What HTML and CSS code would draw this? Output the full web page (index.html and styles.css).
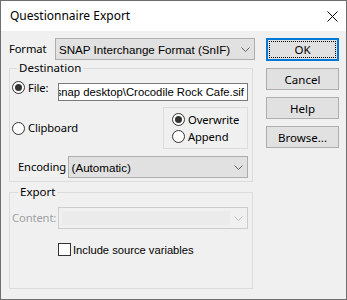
FILE: index.html
```html
<!DOCTYPE html>
<html>
<head>
<meta charset="utf-8">
<link rel="stylesheet" href="styles.css">
</head>
<body>
<div class="window">
  <div class="titlebar">
    <span class="title">Questionnaire Export</span>
    <svg class="close" width="11" height="11" viewBox="0 0 11 11"><path d="M0.5 0.5 L10.5 10.5 M10.5 0.5 L0.5 10.5" stroke="#000" stroke-width="1" fill="none"/></svg>
  </div>
  <div class="body">
    <div class="left">
      <div class="format-row">
        <span class="lbl format-lbl">Format</span>
        <div class="combo format-combo"><span class="combo-text">SNAP Interchange Format (SnIF)</span><span class="chev"><svg width="9" height="5" viewBox="0 0 9 5"><path d="M0.5 0.5 L4.5 4.5 L8.5 0.5" stroke="#606060" fill="none"/></svg></span></div>
      </div>
      <fieldset class="group dest">
        <legend class="legend">Destination</legend>
        <div class="file-row">
          <label class="radio file-radio"><span class="rb on"></span><span class="lbl">File:</span></label>
          <div class="textbox"><span class="tb-text">snap desktop\Crocodile Rock Cafe.sif</span></div>
        </div>
        <div class="clip-row">
          <label class="radio"><span class="rb"></span><span class="lbl">Clipboard</span></label>
          <div class="opts">
            <label class="radio"><span class="rb on"></span><span class="lbl">Overwrite</span></label>
            <label class="radio"><span class="rb"></span><span class="lbl">Append</span></label>
          </div>
        </div>
        <div class="enc-row">
          <span class="lbl enc-lbl">Encoding</span>
          <div class="combo enc-combo"><span class="combo-text">(Automatic)</span><span class="chev"><svg width="9" height="5" viewBox="0 0 9 5"><path d="M0.5 0.5 L4.5 4.5 L8.5 0.5" stroke="#606060" fill="none"/></svg></span></div>
        </div>
      </fieldset>
      <fieldset class="group export">
        <legend class="legend exp-legend">Export</legend>
        <div class="content-row">
          <span class="lbl disabled content-lbl">Content:</span>
          <div class="combo dis-combo"><span class="dis-inner"></span><span class="chev"><svg width="9" height="5" viewBox="0 0 9 5"><path d="M0.5 0.5 L4.5 4.5 L8.5 0.5" stroke="#c0c0c0" fill="none"/></svg></span></div>
        </div>
        <label class="check-row"><span class="cb"></span><span class="tah">Include source variables</span></label>
      </fieldset>
    </div>
    <div class="buttons">
      <div class="btn ok"><span class="focus">OK</span></div>
      <div class="btn">Cancel</div>
      <div class="btn">Help</div>
      <div class="btn">Browse...</div>
    </div>
  </div>
</div>
</body>
</html>
```
FILE: styles.css
```css
* { box-sizing: border-box; }
html, body { margin: 0; padding: 0; background: #f0f0f0; }
.window {
  width: 347px;
  height: 300px;
  border: 1px solid #6e6e6e;
  background: #f0f0f0;
  font-family: "Noto Sans", sans-serif;
  font-size: 11.2px;
  color: #000;
  display: flex;
  flex-direction: column;
}
.titlebar {
  height: 30px;
  background: #fff;
  display: flex;
  align-items: center;
  padding-left: 9px;
  padding-right: 8px;
  flex-shrink: 0;
}
.title { font-size: 12px; flex: 1; margin-top: -1px; }
.close { margin-right: 0; margin-top: 0; }
.body {
  display: flex;
  padding-left: 8px;
  flex: 1;
}
.left { width: 246px; display: flex; flex-direction: column; }
.lbl { white-space: nowrap; line-height: 14px; letter-spacing: -0.1px; }
.tah { font-family: "Liberation Sans", sans-serif; font-size: 11.2px; white-space: nowrap; }
.format-row {
  display: flex;
  align-items: center;
  margin-top: 7px;
  height: 22px;
}
.format-lbl { width: 46px; }
.combo {
  height: 22px;
  border: 1px solid #adadad;
  background: #e1e1e1;
  display: flex;
  align-items: center;
  padding-left: 3px;
  font-family: "Liberation Sans", sans-serif;
  font-size: 11.6px;
}
.combo-text { flex: 1; white-space: nowrap; }
.chev { width: 17px; display: flex; align-items: center; justify-content: center; height: 100%; }
.format-combo { width: 200px; }
.group {
  border: 1px solid #dcdcdc;
  margin: 0;
  padding: 0 4px 0 2px;
  width: 244px;
  min-width: 0;
}
.legend {
  padding: 0 2px;
  margin-left: 5px;
  line-height: 14px;
  height: 14px;
  font-size: 11.5px;
}
.exp-legend { margin-left: 6px; }
.dest { margin-top: 1px; padding-bottom: 3px; }
.file-row {
  display: flex;
  align-items: flex-start;
  margin-top: 8px;
}
.radio { display: flex; align-items: center; height: 13px; }
.file-radio { margin-top: -2px; width: 46px; }
.rb {
  width: 13px;
  height: 13px;
  border: 1px solid #333;
  border-radius: 50%;
  background: #fff;
  margin-right: 3px;
  display: flex;
  align-items: center;
  justify-content: center;
  flex-shrink: 0;
}
.rb.on::after {
  content: "";
  width: 7px;
  height: 7px;
  border-radius: 50%;
  background: #333;
}
.textbox {
  width: 190px;
  height: 18px;
  border: 1px solid #7a7a7a;
  background: #fff;
  overflow: hidden;
  display: flex;
  justify-content: flex-end;
  align-items: center;
  padding-right: 3px;
  font-family: "Liberation Sans", sans-serif;
  font-size: 11.3px;
}
.tb-text { white-space: nowrap; }
.clip-row {
  display: flex;
  align-items: center;
  justify-content: space-between;
  margin-top: 6px;
}
.opts {
  width: 85px;
  height: 42px;
  border: 1px solid #dcdcdc;
  padding: 5px 0 0 8px;
  display: flex;
  flex-direction: column;
  gap: 4px;
}
.enc-row {
  display: flex;
  align-items: center;
  margin-top: 7px;
  padding-left: 6px;
}
.enc-lbl { width: 50px; }
.enc-combo { width: 182px; }
.export { margin-top: 3px; height: 104px; }
.content-row {
  display: flex;
  align-items: center;
  margin-top: 8px;
}
.content-lbl { width: 46px; color: #a0a0a0; }
.dis-combo {
  width: 190px;
  border-color: #cccccc;
  background: #f0f0f0;
  padding: 3px 0 3px 3px;
}
.dis-inner { flex: 1; height: 14px; background: #ebebeb; }
.check-row {
  display: flex;
  align-items: center;
  margin-top: 14px;
  margin-left: 46px;
  height: 13px;
}
.cb {
  width: 13px;
  height: 13px;
  border: 1px solid #333;
  background: #fff;
  margin-right: 2px;
}
.buttons {
  display: flex;
  flex-direction: column;
  gap: 7px;
  margin-left: 11px;
  padding-top: 7px;
}
.btn {
  width: 73px;
  height: 22px;
  border: 1px solid #adadad;
  background: #e1e1e1;
  display: flex;
  align-items: center;
  justify-content: center;
  font-family: "Noto Sans", sans-serif;
  font-size: 11.5px;
}
.btn.ok {
  height: 23px;
  border: 2px solid #0078d7;
  padding: 1px;
}
.focus {
  width: 100%;
  height: 100%;
  border: 1px dotted #000;
  display: flex;
  align-items: center;
  justify-content: center;
}
```
